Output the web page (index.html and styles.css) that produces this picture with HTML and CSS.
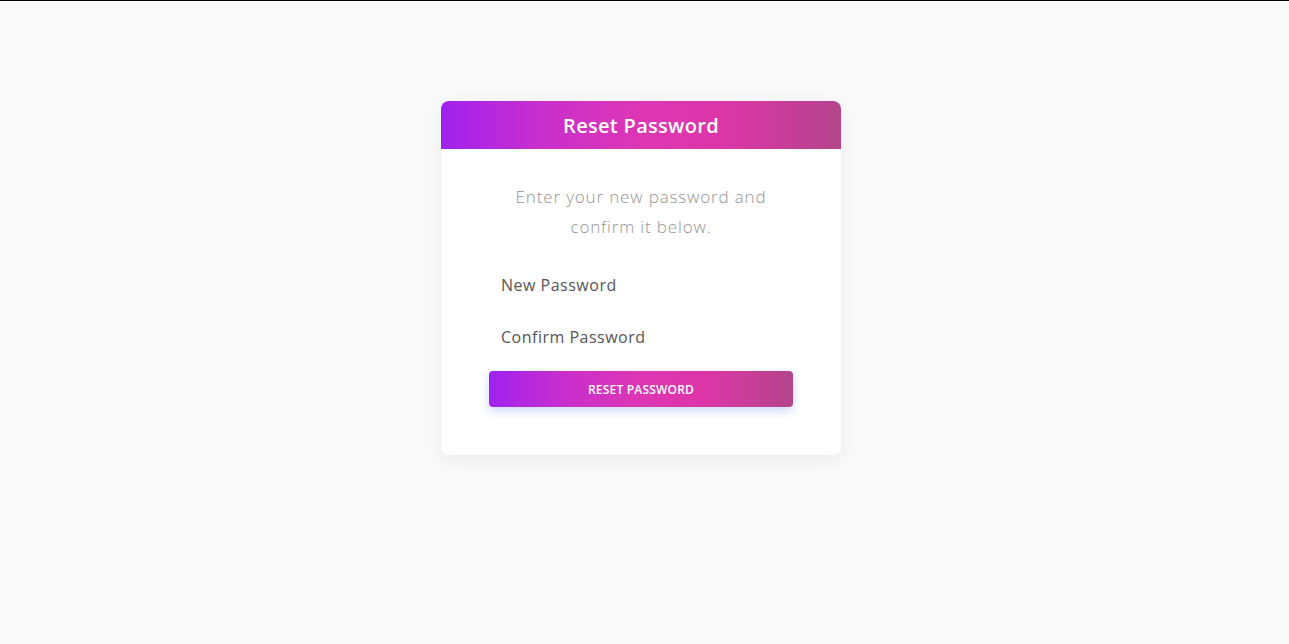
FILE: index.html
```html
<!DOCTYPE html>
<html lang="en">
<head>
<meta charset="utf-8">
<title>Reset Password</title>
<link rel="stylesheet" href="styles.css">
</head>
<body>
<main class="page">
  <section class="card">
    <header class="card-header">
      <h1 class="card-title">Reset Password</h1>
    </header>
    <div class="card-body">
      <p class="desc">Enter your new password and confirm it below.</p>
      <form class="form">
        <div class="field"><label class="label">New Password</label></div>
        <div class="field"><label class="label">Confirm Password</label></div>
        <button type="button" class="btn">Reset Password</button>
      </form>
    </div>
  </section>
</main>
</body>
</html>
```
FILE: styles.css
```css
* { box-sizing: border-box; }
html, body { margin: 0; padding: 0; }
body {
  background: #fafafa;
  border-top: 1px solid #000;
  font-family: "Open Sans", "Noto Sans", sans-serif;
  height: 644px;
}
.page {
  display: flex;
  justify-content: center;
  padding-top: 100px;
  padding-right: 7px;
}
.card {
  width: 400px;
  background: #fff;
  border-radius: 8px;
  box-shadow: 0 5px 20px rgba(0, 0, 0, 0.07);
  overflow: hidden;
}
.card-header {
  height: 48px;
  display: flex;
  align-items: center;
  justify-content: center;
  background: linear-gradient(90deg, #a021ee 0%, #c92fcc 25%, #dc36b4 50%, #dd35a8 70%, #b4458b 100%);
}
.card-title {
  margin: 0;
  color: #fff;
  font-size: 20px;
  font-weight: 600;
  letter-spacing: 0.3px;
}
.card-body {
  padding: 33px 48px 48px;
}
.desc {
  margin: 0 auto 31px;
  width: 290px;
  text-align: center;
  color: #949494;
  font-size: 17px;
  line-height: 30px;
  font-weight: 300;
  letter-spacing: 0.85px;
}
.form {
  display: flex;
  flex-direction: column;
  gap: 28px;
}
.field { padding-left: 12px; }
.label {
  display: block;
  color: #555;
  font-size: 16px;
  line-height: 24px;
  letter-spacing: 0.5px;
}
.btn {
  margin-top: -6px;
  height: 36px;
  border: 0;
  border-radius: 4px;
  color: #fff;
  font-family: inherit;
  font-size: 12px;
  font-weight: 600;
  letter-spacing: 0.2px;
  text-transform: uppercase;
  background: linear-gradient(90deg, #a021ee 0%, #c92fcc 25%, #dc36b4 50%, #dd35a8 70%, #b4458b 100%);
  box-shadow: 0 4px 10px rgba(90, 130, 240, 0.3);
}
```
